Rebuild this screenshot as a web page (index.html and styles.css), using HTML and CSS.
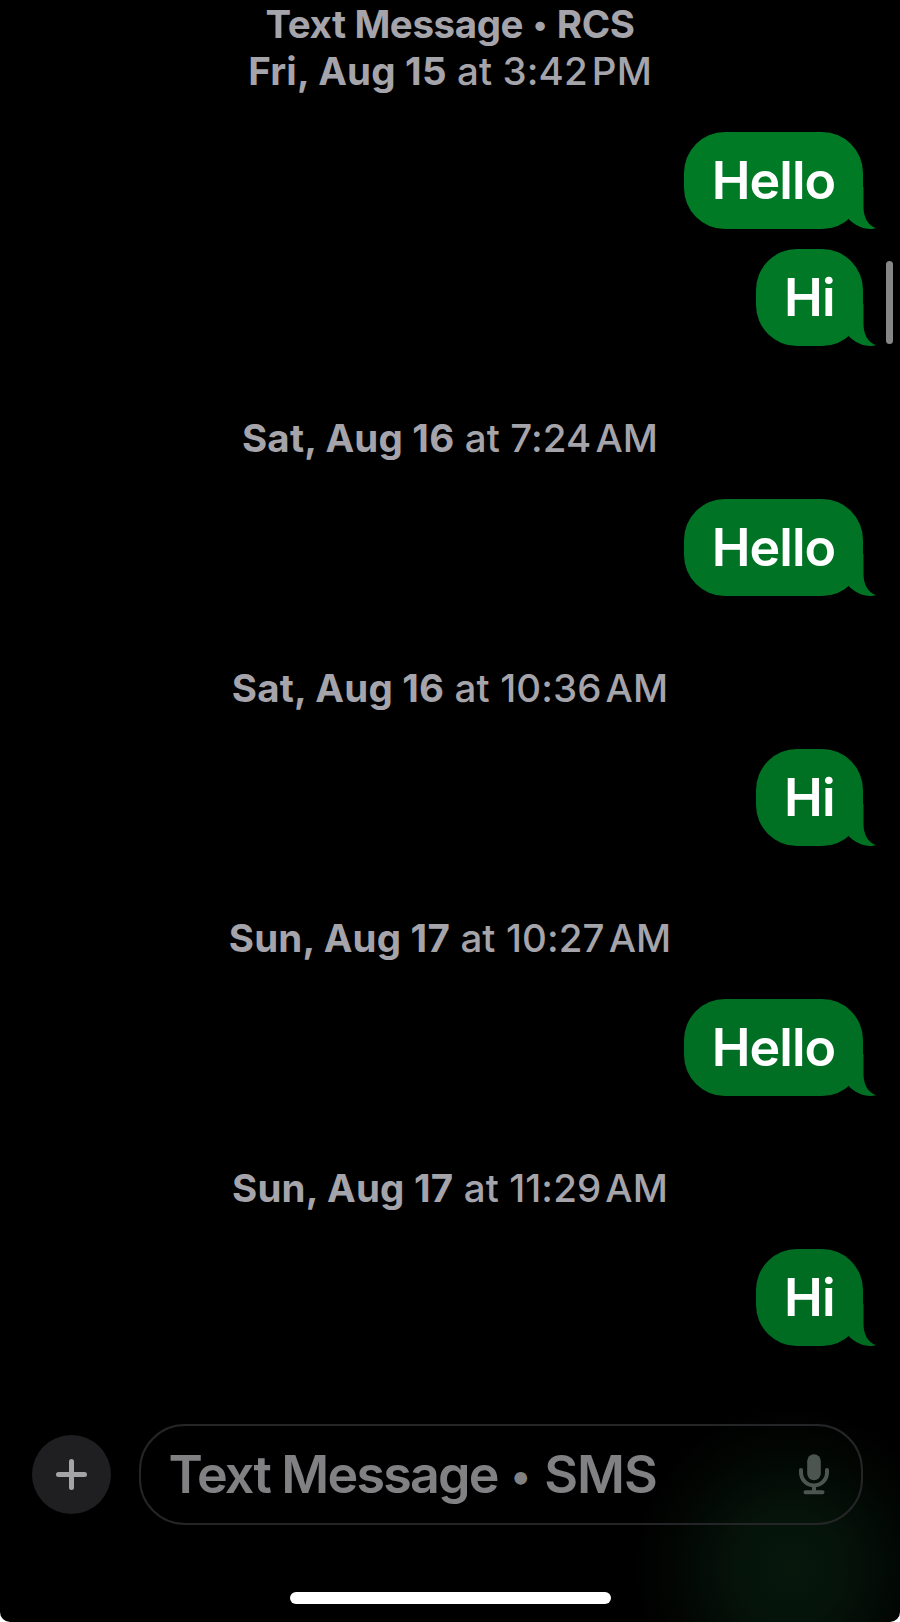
FILE: index.html
```html
<!DOCTYPE html>
<html lang="en">
<head>
<meta charset="utf-8">
<title>Messages</title>
<link rel="stylesheet" href="styles.css">
</head>
<body>
<svg width="0" height="0" class="defs" aria-hidden="true">
  <symbol id="tail" viewBox="0 0 28 45"><path d="M15.5 3V23C15.5 33 19.500 41 28 44.300C18 46.500 8 42.500 1 35.500L0 3Z"/></symbol>
</svg>
<main class="phone">
  <section class="thread">
    <div class="stamp service"><b>Text Message <em>•</em> RCS</b></div>
    <time class="stamp s1"><b>Fri, Aug 15</b> at 3:42<i></i>PM</time>
    <div class="bubble hello g1"><span>Hello</span><svg class="tail"><use href="#tail"/></svg></div>
    <div class="bubble hi next g2"><span>Hi</span><svg class="tail"><use href="#tail"/></svg></div>
    <time class="stamp s2"><b>Sat, Aug 16</b> at 7:24<i></i>AM</time>
    <div class="bubble hello g3"><span>Hello</span><svg class="tail"><use href="#tail"/></svg></div>
    <time class="stamp s3"><b>Sat, Aug 16</b> at 10:36<i></i>AM</time>
    <div class="bubble hi g4"><span>Hi</span><svg class="tail"><use href="#tail"/></svg></div>
    <time class="stamp s4"><b>Sun, Aug 17</b> at 10:27<i></i>AM</time>
    <div class="bubble hello g5"><span>Hello</span><svg class="tail"><use href="#tail"/></svg></div>
    <time class="stamp s5"><b>Sun, Aug 17</b> at 11:29<i></i>AM</time>
    <div class="bubble hi g6"><span>Hi</span><svg class="tail"><use href="#tail"/></svg></div>
  </section>
  <footer class="composer">
    <div class="plus">
      <svg width="32" height="32" viewBox="0 0 32 32"><path d="M15.500 2.500V28.500M2.500 15.500H28.500" fill="none" stroke="#a4a4a6" stroke-width="5" stroke-linecap="round"/></svg>
    </div>
    <div class="field">
      <span class="placeholder">Text Message <em>•</em> <span class="kind">SMS</span></span>
      <svg class="mic" width="30" height="41" viewBox="0 0 30 41"><rect x="8.2" y="0.3" width="13.6" height="26" rx="6.8" fill="#4d5551"/><path d="M2 16V18.5A13 13 0 0 0 28 18.5V16M15 32V38M6.5 38.2H23.500" fill="none" stroke="#4d5551" stroke-width="4" stroke-linecap="round"/></svg>
    </div>
  </footer>
  <div class="home"></div>
  <div class="scrollbar"></div>
</main>
</body>
</html>
```
FILE: styles.css
```css
* { box-sizing: border-box; }
body { margin: 0; background: #fff; font-family: Inter, "Liberation Sans", sans-serif; }
.defs { position: absolute; }
.phone {
  position: relative;
  width: 900px; height: 1622px;
  overflow: hidden;
  border-radius: 0 0 10px 10px;
  background: radial-gradient(ellipse 155px 160px at 790px 1568px, #06170c 0%, #05130a 35%, #020703 72%, #000 100%), #000;
  display: flex; flex-direction: column;
}
.thread { display: flex; flex-direction: column; padding-right: 37px; }
.stamp {
  width: 900px; height: 47px; line-height: 47px;
  font-size: 38.5px; font-weight: 530; color: #a5a4ab;
  letter-spacing: 0.1px;
  text-align: center; white-space: nowrap;
  margin-top: 68.5px;
}
.stamp b { font-weight: 700; letter-spacing: 0.2px; }
.stamp i { display: inline-block; width: 4px; }
em { font-style: normal; font-size: 0.78em; line-height: 1; position: relative; top: -0.08em; margin: 0 0.04em; }
.service { margin-top: 0.5px; }
.stamp.service b { letter-spacing: -0.4px; }
.s1 { margin-top: 0; }
.bubble {
  position: relative; align-self: flex-end;
  height: 97px; margin-top: 37.5px;
  border-radius: 41px;
  color: #fff;
  font-size: 52px; font-weight: 600; line-height: 97px;
  display: flex; justify-content: center;
}
.bubble.next { margin-top: 20.5px; }
.hello { width: 179px; letter-spacing: -1px; }
.hi { width: 107px; letter-spacing: -0.8px; }
.s1 + .bubble { margin-top: 37px; }
.tail { position: absolute; right: -12.5px; bottom: 0; width: 28px; height: 45px; z-index: 0; }
.bubble span { position: relative; z-index: 1; }
.g1 { background: #007a25; } .g1 .tail { fill: #007a25; }
.g2 { background: #007825; } .g2 .tail { fill: #007825; }
.g3 { background: #007424; } .g3 .tail { fill: #007424; }
.g4 { background: #007023; } .g4 .tail { fill: #007023; }
.g5 { background: #006e23; } .g5 .tail { fill: #006e23; }
.g6 { background: #006c22; } .g6 .tail { fill: #006c22; }
.composer { display: flex; align-items: center; gap: 28px; padding: 0 37px 0 32px; margin-top: 78px; height: 101px; }
.plus { width: 79px; height: 79px; border-radius: 50%; background: #1f1f21; display: flex; align-items: center; justify-content: center; }
.field {
  flex: 1; height: 101px; border: 2px solid #242526; border-radius: 46px;
  display: flex; align-items: center; justify-content: space-between;
  padding: 0 32px 0 27.5px;
}
.placeholder { font-size: 52px; font-weight: 600; color: #818184; white-space: nowrap; line-height: 97px; letter-spacing: -1.8px; }
.kind { letter-spacing: -0.9px; margin-left: 2px; }
.home { width: 321px; height: 12px; border-radius: 6px; background: #fff; margin: 67px 0 0 290px; }
.scrollbar { position: absolute; left: 886px; top: 261px; width: 7px; height: 83px; border-radius: 4px; background: #868686; }
```
